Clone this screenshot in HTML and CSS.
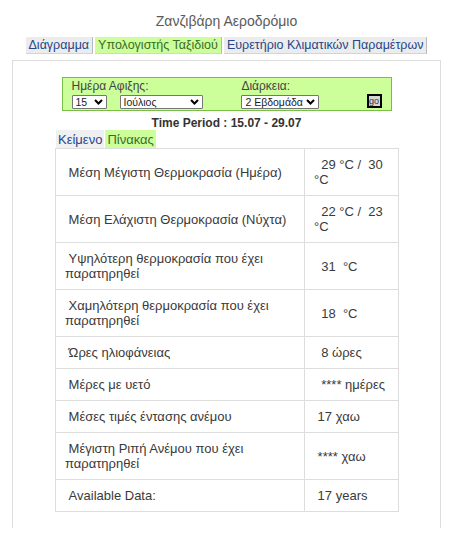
FILE: index.html
```html
<!DOCTYPE html>
<html lang="el">
<head>
    <meta charset="UTF-8">
    <meta name="viewport" content="width=device-width, initial-scale=1.0">
    <title>Ζανζιβάρη Αεροδρόμιο - Υπολογιστής Ταξιδιού</title>
    <link rel="stylesheet" href="styles.css">
</head>
<body>
    <h1 class="title">Ζανζιβάρη Αεροδρόμιο</h1>

    <div class="tabs">
        <a class="tab" href="#">Διάγραμμα</a>
        <a class="tab active" href="#">Υπολογιστής Ταξιδιού</a>
        <a class="tab" href="#">Ευρετήριο Κλιματικών Παραμέτρων</a>
    </div>

    <div class="panel">
        <form class="travel-form">
            <div class="field field-day">
                <label>Ημέρα Αφιξης:</label>
                <div class="selects">
                    <span class="select sel-day">
                        <select><option>15</option></select>
                        <svg class="chev" width="9" height="6" viewBox="0 0 9 6"><path d="M1 1l3.5 3.5L8 1" fill="none" stroke="#000" stroke-width="2"/></svg>
                    </span>
                    <span class="select sel-month">
                        <select><option>Ιούλιος</option></select>
                        <svg class="chev" width="9" height="6" viewBox="0 0 9 6"><path d="M1 1l3.5 3.5L8 1" fill="none" stroke="#000" stroke-width="2"/></svg>
                    </span>
                </div>
            </div>
            <div class="field field-dur">
                <label>Διάρκεια:</label>
                <div class="selects">
                    <span class="select sel-dur">
                        <select><option>2 Εβδομάδα</option></select>
                        <svg class="chev" width="9" height="6" viewBox="0 0 9 6"><path d="M1 1l3.5 3.5L8 1" fill="none" stroke="#000" stroke-width="2"/></svg>
                    </span>
                </div>
            </div>
            <button type="submit" class="go">go</button>
        </form>

        <div class="period">Time Period : 15.07 - 29.07</div>

        <div class="result">
            <div class="subtabs">
                <a class="subtab" href="#">Κείμενο</a>
                <a class="subtab active" href="#">Πίνακας</a>
            </div>
            <table class="climate">
                <colgroup><col class="col-label"><col class="col-value"></colgroup>
                <tr><td>&nbsp;Μέση Μέγιστη Θερμοκρασία (Ημέρα)</td><td>&nbsp;&nbsp;29 °C / &nbsp;30 °C</td></tr>
                <tr><td>&nbsp;Μέση Ελάχιστη Θερμοκρασία (Νύχτα)</td><td>&nbsp;&nbsp;22 °C / &nbsp;23 °C</td></tr>
                <tr><td>&nbsp;Υψηλότερη θερμοκρασία που έχει παρατηρηθεί</td><td>&nbsp;&nbsp;31 &nbsp;°C</td></tr>
                <tr><td>&nbsp;Χαμηλότερη θερμοκρασία που έχει παρατηρηθεί</td><td>&nbsp;&nbsp;18 &nbsp;°C</td></tr>
                <tr><td>&nbsp;Ώρες ηλιοφάνειας</td><td>&nbsp;&nbsp;8 ώρες</td></tr>
                <tr><td>&nbsp;Μέρες με υετό</td><td>&nbsp;&nbsp;**** ημέρες</td></tr>
                <tr><td>&nbsp;Μέσες τιμές έντασης ανέμου</td><td>&nbsp;17 χαω</td></tr>
                <tr><td>&nbsp;Μέγιστη Ριπή Ανέμου που έχει παρατηρηθεί</td><td>&nbsp;**** χαω</td></tr>
                <tr><td>&nbsp;Available Data:</td><td>&nbsp;17 years</td></tr>
            </table>
        </div>
    </div>
</body>
</html>
```

FILE: styles.css
```css
body {
    margin: 0;
    font-family: "Liberation Sans", Arial, sans-serif;
    color: #333;
    background: #fff;
}
.title {
    margin: 0;
    padding-top: 12px;
    font-size: 14px;
    line-height: 18px;
    font-weight: normal;
    color: #5a5a5a;
    text-align: center;
}
.tabs {
    margin-top: 7px;
    display: flex;
    justify-content: center;
    gap: 2px;
}
.tab {
    padding: 1px 3px 0;
    font-size: 12.5px;
    line-height: 15px;
    color: #24468a;
    text-decoration: none;
    background: #ececec;
    border-right: 1px solid #b8b8b8;
    border-bottom: 1px solid #d4d4d4;
}
.tab.active {
    background: #ccff99;
    color: #3b6b2b;
}
.panel {
    margin: 6px 12px 0;
    padding: 16px 0;
    border: 1px solid #ddd;
    border-bottom: none;
}
.travel-form {
    width: 310px;
    margin: 0 auto;
    padding: 2px 9px 1px;
    display: flex;
    align-items: flex-end;
    background: #ccff99;
    border: 1px solid #77c043;
}
.field label {
    display: block;
    font-size: 12px;
    line-height: 13px;
    color: #444;
}
.selects {
    margin-top: 2px;
    display: flex;
    gap: 13px;
}
.field-day {
    width: 171px;
}
.field-dur {
    width: 126px;
}
.select {
    position: relative;
    display: block;
    height: 14px;
}
.select select {
    appearance: none;
    -webkit-appearance: none;
    display: block;
    height: 14px;
    margin: 0;
    padding: 0 0 0 3px;
    font-family: "Liberation Sans", Arial, sans-serif;
    font-size: 10.5px;
    line-height: 12px;
    color: #222;
    background: #fff;
    border: 1px solid #767676;
    border-radius: 1px;
}
.sel-day select { width: 35px; }
.sel-month select { width: 83px; }
.sel-dur select { width: 78px; }
.chev {
    position: absolute;
    right: 4px;
    top: 4px;
    pointer-events: none;
}
.go {
    width: 15px;
    height: 14px;
    margin: 0 0 1px;
    padding: 0;
    font-family: "Liberation Sans", Arial, sans-serif;
    font-size: 9px;
    line-height: 9px;
    color: #333;
    background: #d6d6d6;
    border: 2px solid #000;
    border-radius: 0;
}
.period {
    margin-top: 6px;
    font-size: 12px;
    line-height: 13px;
    font-weight: bold;
    text-align: center;
    color: #333;
}
.result {
    width: 343px;
    margin: 0 auto;
}
.subtabs {
    display: flex;
    gap: 1px;
    padding-left: 1px;
}
.subtab {
    padding: 2px 2px 1px;
    font-size: 13px;
    line-height: 15px;
    color: #24468a;
    text-decoration: none;
    background: #eef0f2;
}
.subtab.active {
    background: #ccff99;
    color: #3b6b2b;
}
.climate {
    width: 343px;
    table-layout: fixed;
    border-collapse: collapse;
    font-size: 13px;
    line-height: 15px;
    color: #3a3a3a;
}
.col-label { width: 249px; }
.col-value { width: 94px; }
.climate td {
    padding: 8px 9px;
    border: 1px solid #ddd;
    vertical-align: middle;
}
```
